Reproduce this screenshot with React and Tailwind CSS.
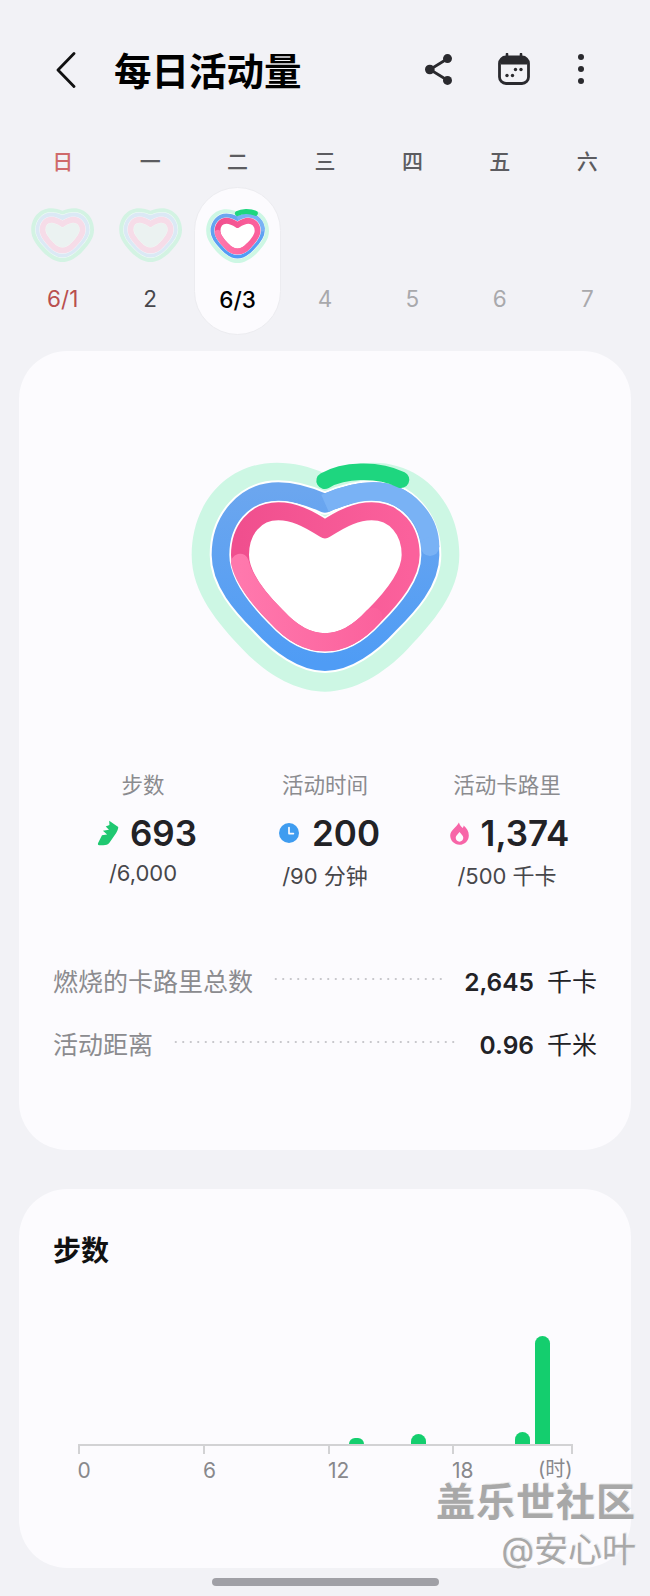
import React from "react";

const MINT_PATH = "M465 100 C510 80 560 68 610 68 C760 68 868 190 868 345 C868 460 785 550 715 625 C640 705 550 755 465 755 C380 755 290 705 215 625 C145 550 65 460 65 345 C65 190 170 68 320 68 C370 68 420 80 465 100 Z";
const BLUE_PATH = "M465 190 C515 168 560 155 610 155 C710 155 780 240 780 345 C780 425 715 495 655 555 C600 615 530 665 465 665 C400 665 330 615 275 555 C215 495 153 425 153 345 C153 240 225 155 325 155 C370 155 415 168 465 190 Z";
const PINK_PATH = "M465 268 C520 232 560 214 605 214 C675 214 722 270 722 345 C722 405 670 470 610 530 C560 585 515 607 465 607 C415 607 370 585 320 530 C260 470 210 405 210 345 C210 270 255 214 325 214 C370 214 410 232 465 268 Z";

const Heart = ({ id, faded, mini, className }) => {
  const blueW = mini ? 66 : 56;
  const pinkW = mini ? 74 : 54;
  return (
    <svg viewBox="0 0 930 780" className={className}>
      <defs>
        <linearGradient id={`${id}-blue`} x1="0" y1="150" x2="0" y2="670" gradientUnits="userSpaceOnUse">
          <stop offset="0" stopColor="#6ba6ef" />
          <stop offset="1" stopColor="#4f9cf5" />
        </linearGradient>
        <linearGradient id={`${id}-pink`} x1="210" y1="0" x2="722" y2="0" gradientUnits="userSpaceOnUse">
          <stop offset="0" stopColor="#f04f8e" />
          <stop offset="1" stopColor="#fb619c" />
        </linearGradient>
        <linearGradient id={`${id}-pinktop`} x1="210" y1="0" x2="640" y2="0" gradientUnits="userSpaceOnUse">
          <stop offset="0" stopColor="#ff78ad" />
          <stop offset="1" stopColor="#fb619c" />
        </linearGradient>
      </defs>
      <path d={MINT_PATH} fill={faded ? "#d3f3e3" : "#cdf7e4"} />
      <path d={BLUE_PATH} fill="none" stroke="#ffffff" strokeWidth={blueW + 12} strokeLinejoin="round" opacity={faded ? 0.7 : 1} />
      <path d={BLUE_PATH} fill="none" stroke={faded ? "#dbe9f5" : `url(#${id}-blue)`} strokeWidth={blueW} strokeLinejoin="round" />
      {!faded && (
        <>
          <path d="M465 190 C515 168 560 155 610 155 C710 155 780 240 780 320" fill="none" stroke="#79b2f5" strokeWidth={blueW} />
          <circle cx="780" cy="320" r={blueW / 2} fill="#79b2f5" />
        </>
      )}
      <path d={PINK_PATH} fill={faded ? "#f6f2f7" : "#ffffff"} stroke="#ffffff" strokeWidth={pinkW + 10} strokeLinejoin="round" opacity={faded ? 0.7 : 1} />
      <path d={PINK_PATH} fill="none" stroke={faded ? "#f6dce8" : `url(#${id}-pink)`} strokeWidth={pinkW} strokeLinejoin="round" />
      {!faded && (
        <>
          <path d="M210 368 C222 420 265 475 320 530 C370 585 415 607 465 607 C515 607 560 585 610 530" fill="none" stroke={`url(#${id}-pinktop)`} strokeWidth={pinkW} strokeLinecap="round" />
          <path d="M464 122 C520 90 620 84 693 119" fill="none" stroke="#1ed67f" strokeWidth={mini ? 64 : 50} strokeLinecap="round" />
        </>
      )}
    </svg>
  );
};

const days = [
  { week: "日", date: "6/1", weekCls: "text-[#cf6a6a]", dateCls: "text-[#b94f4f]", heart: true },
  { week: "一", date: "2", weekCls: "text-[#5c5c60]", dateCls: "text-[#47474b]", heart: true },
  { week: "二", date: "6/3", weekCls: "text-[#5c5c60]", dateCls: "text-black font-medium", heart: true, active: true },
  { week: "三", date: "4", weekCls: "text-[#5c5c60]", dateCls: "text-[#a9a9ac]" },
  { week: "四", date: "5", weekCls: "text-[#5c5c60]", dateCls: "text-[#a9a9ac]" },
  { week: "五", date: "6", weekCls: "text-[#5c5c60]", dateCls: "text-[#a9a9ac]" },
  { week: "六", date: "7", weekCls: "text-[#5c5c60]", dateCls: "text-[#a9a9ac]" },
];

const ShoeIcon = () => (
  <svg viewBox="0 0 24 28" className="w-[23px] h-[26px] shrink-0">
    <path d="M12.75 .75 L22.5 7.5 C22.5 9.5 21.5 12 20.25 14 L13 24.5 C11.5 26.5 9 27.2 6.5 27.2 L2 27.2 C.5 27.2 .3 26 .8 24.8 L5 16.5 L10.5 15.5 L6 11.5 L12.5 10.5 L9 7 L13 5.5 Z" fill="#1fc871" />
  </svg>
);

const ClockIcon = () => (
  <svg viewBox="0 0 20 20" className="w-[20px] h-[20px] shrink-0">
    <circle cx="10" cy="10" r="10" fill="#3f9cf0" />
    <path d="M10 4.6 V10.6 H14.4" fill="none" stroke="#fcfbfe" strokeWidth="1.7" strokeLinecap="round" strokeLinejoin="round" />
  </svg>
);

const FlameIcon = () => (
  <svg viewBox="0 0 20 24" className="w-[19px] h-[23px] shrink-0">
    <path d="M9.4 0.4 C10 3.4 12 4.6 13.4 6.2 C14 5.4 14.4 4.6 14.4 3.6 C17.8 6.4 19.8 10 19.8 14 C19.8 19.6 15.4 23.8 10 23.8 C4.6 23.8 0.2 19.6 0.2 14.2 C0.2 8.6 6.6 6 9.4 0.4 Z" fill="#f765a8" />
    <path d="M10 10.4 C11.8 12.6 14 14.2 14 16.6 C14 19 12.2 20.6 10 20.6 C7.8 20.6 6 19 6 16.6 C6 14.2 8.4 12.8 10 10.4 Z" fill="#fcfbfe" />
  </svg>
);

const stats = [
  { label: "步数", value: "693", goal: "/6,000", Icon: ShoeIcon, rowCls: "gap-[10px] pl-[8px]", goalMt: "mt-[3px]" },
  { label: "活动时间", value: "200", goal: "/90 分钟", Icon: ClockIcon, rowCls: "gap-[13px] pl-[9px]", goalMt: "mt-[6px]" },
  { label: "活动卡路里", value: "1,374", goal: "/500 千卡", Icon: FlameIcon, rowCls: "gap-[12px] pl-[5px]", goalMt: "mt-[6px]" },
];

const rows = [
  { label: "燃烧的卡路里总数", value: "2,645", unit: "千卡", dotMr: "mr-[19px]" },
  { label: "活动距离", value: "0.96", unit: "千米", dotMr: "mr-[24px]" },
];

const bars = [
  { hour: 13, height: 6 },
  { hour: 16, height: 10 },
  { hour: 21, height: 12 },
  { hour: 22, height: 108 },
];

const hours = Array.from({ length: 24 }, (_, i) => i);

export default function App() {
  return (
    <div className="relative w-[650px] h-[1596px] overflow-hidden bg-[#f2f2f6] font-['Inter','Noto_Sans_CJK_SC',sans-serif]">
      {/* top bar */}
      <div className="flex items-center h-[138px] pl-[54px] pr-[66.5px]">
        <svg viewBox="0 0 24 36" className="w-[24px] h-[36px] mt-[1px]">
          <path d="M20 1.5 L4 18 L20 34.5" fill="none" stroke="#111" strokeWidth="2.8" strokeLinecap="round" strokeLinejoin="round" />
        </svg>
        <h1 className="ml-[36px] text-[37.5px] leading-[44px] font-bold text-black mt-[6px]">每日活动量</h1>
        <div className="ml-auto flex items-center">
          <svg viewBox="0 0 27 31" className="w-[27px] h-[31px]">
            <path d="M22 5 L5 15.5 L22 26" fill="none" stroke="#2a2a2e" strokeWidth="2.8" />
            <circle cx="22.5" cy="4.6" r="4.5" fill="#2a2a2e" />
            <circle cx="4.8" cy="15.5" r="4.8" fill="#2a2a2e" />
            <circle cx="22.5" cy="26.4" r="4.5" fill="#2a2a2e" />
          </svg>
          <svg viewBox="0 0 32 32" className="ml-[46px] w-[32px] h-[32px]">
            <rect x="1.5" y="4" width="29" height="26.5" rx="6.5" fill="none" stroke="#2a2a2e" strokeWidth="2.8" />
            <path d="M3 6 Q3 4 8 4 H24 Q29 4 29 6 V11.5 H3 Z" fill="#2a2a2e" />
            <path d="M9 1 V5 M23 1 V5" stroke="#2a2a2e" strokeWidth="2.6" strokeLinecap="round" />
            <circle cx="17.5" cy="16.5" r="1.7" fill="#2a2a2e" />
            <circle cx="23" cy="16.5" r="1.7" fill="#2a2a2e" />
            <circle cx="9" cy="22.5" r="1.7" fill="#2a2a2e" />
            <circle cx="14.5" cy="22.5" r="1.7" fill="#2a2a2e" />
          </svg>
          <div className="ml-[48px] flex flex-col gap-[6.5px]">
            <span className="block w-[5.5px] h-[5.5px] rounded-full bg-[#2a2a2e]" />
            <span className="block w-[5.5px] h-[5.5px] rounded-full bg-[#2a2a2e]" />
            <span className="block w-[5.5px] h-[5.5px] rounded-full bg-[#2a2a2e]" />
          </div>
        </div>
      </div>

      {/* week strip */}
      <div className="grid grid-cols-7 px-[19px]">
        {days.map((d) => (
          <div key={d.week} className="flex flex-col items-center">
            <div className={`h-[49px] text-[21px] leading-[48px] font-medium ${d.weekCls}`}>{d.week}</div>
            <div className={`w-[87px] h-[148px] flex flex-col items-center rounded-full ${d.active ? "bg-[#fcfbfe] border border-[#ececf0]" : ""}`}>
              <div className="h-[61px] mt-[16px]">
                {d.heart && <Heart id={`day-${d.date}`} mini faded={!d.active} className="w-[73px] h-[61px]" />}
              </div>
              <div className={`mt-[20px] text-[22.5px] leading-[30px] ${d.dateCls}`}>{d.date}</div>
            </div>
          </div>
        ))}
      </div>

      {/* summary card */}
      <div className="mx-[19px] mt-[16px] h-[799px] rounded-[48px] bg-[#fcfbfe] pt-[89px] flex flex-col items-center">
        <Heart id="main" className="w-[310px] h-[260px]" />

        <div className="mt-[70px] w-[546px] grid grid-cols-3">
          {stats.map(({ label, value, goal, Icon, rowCls, goalMt }) => (
            <div key={label} className="flex flex-col items-center">
              <div className="text-[21.5px] leading-[30px] text-[#8b8b8f]">{label}</div>
              <div className={`mt-[11px] h-[44px] flex items-center ${rowCls}`}>
                <Icon />
                <span className="text-[35px] leading-[44px] font-semibold text-[#222226]">{value}</span>
              </div>
              <div className={`${goalMt} text-[22px] leading-[30px] text-[#47474b]`}>{goal}</div>
            </div>
          ))}
        </div>

        <div className="mt-[59px] w-[544px] flex flex-col">
          {rows.map((r) => (
            <div key={r.label} className="flex items-center h-[63px]">
              <span className="text-[25px] leading-[36px] text-[#8b8b8f]">{r.label}</span>
              <span className={`ml-[19px] ${r.dotMr} flex-1 h-[4px] -mt-[6px] bg-[radial-gradient(circle,#c8c8cc_1px,transparent_1.3px)] bg-[length:7.5px_4px]`} />
              <span className="text-[24.5px] leading-[36px] font-semibold text-[#222226]">{r.value}</span>
              <span className="ml-[13px] text-[25px] leading-[36px] text-[#222226]">{r.unit}</span>
            </div>
          ))}
        </div>
      </div>

      {/* steps card */}
      <div className="mx-[19px] mt-[39px] h-[379px] rounded-[48px] bg-[#fcfbfe] pl-[34px] pt-[42px]">
        <h2 className="text-[28px] leading-[40px] font-bold text-[#111]">步数</h2>
        <div className="mt-[65px] ml-[24.5px] w-[495px]">
          <div className="grid grid-cols-[repeat(24,20.7px)] items-end h-[108px]">
            {hours.map((h) => {
              const bar = bars.find((b) => b.hour === h);
              return (
                <div key={h} className="flex justify-center">
                  {bar && <div className="w-[15px] rounded-t-full bg-[#14ce6e]" style={{ height: bar.height }} />}
                </div>
              );
            })}
          </div>
          <div className="flex h-[10px] border-t-2 border-r-2 border-[#d2d2d4]">
            <span className="w-[125.5px] border-l-2 border-[#d2d2d4]" />
            <span className="w-[125px] border-l-2 border-[#d2d2d4]" />
            <span className="w-[124px] border-l-2 border-[#d2d2d4]" />
            <span className="flex-1 border-l-2 border-[#d2d2d4]" />
          </div>
          <div className="flex items-start mt-[5px] text-[21px] leading-[24px] text-[#88888c]">
            <span className="w-[125.5px]">0</span>
            <span className="w-[125px]">6</span>
            <span className="w-[124px]">12</span>
            <span className="flex-1">18</span>
            <span className="text-[20px] leading-[22px] -mt-[1px]">(时)</span>
          </div>
        </div>
      </div>

      {/* gesture bar */}
      <div className="mx-auto mt-[10px] w-[227px] h-[8px] rounded-full bg-[#a0a0a6]" />

      {/* forum watermark */}
      <div className="absolute right-[14px] top-[1483px] flex flex-col items-end text-[#a8a8a8]">
        <div className="text-[39px] leading-[38px] font-bold tracking-[1px] [text-shadow:1px_-1px_0_#e8e8e8]">盖乐世社区</div>
        <div className="mt-[9px] text-[34px] leading-[40px] [text-shadow:1px_-1px_0_#e8e8e8]">@安心叶</div>
      </div>
    </div>
  );
}
